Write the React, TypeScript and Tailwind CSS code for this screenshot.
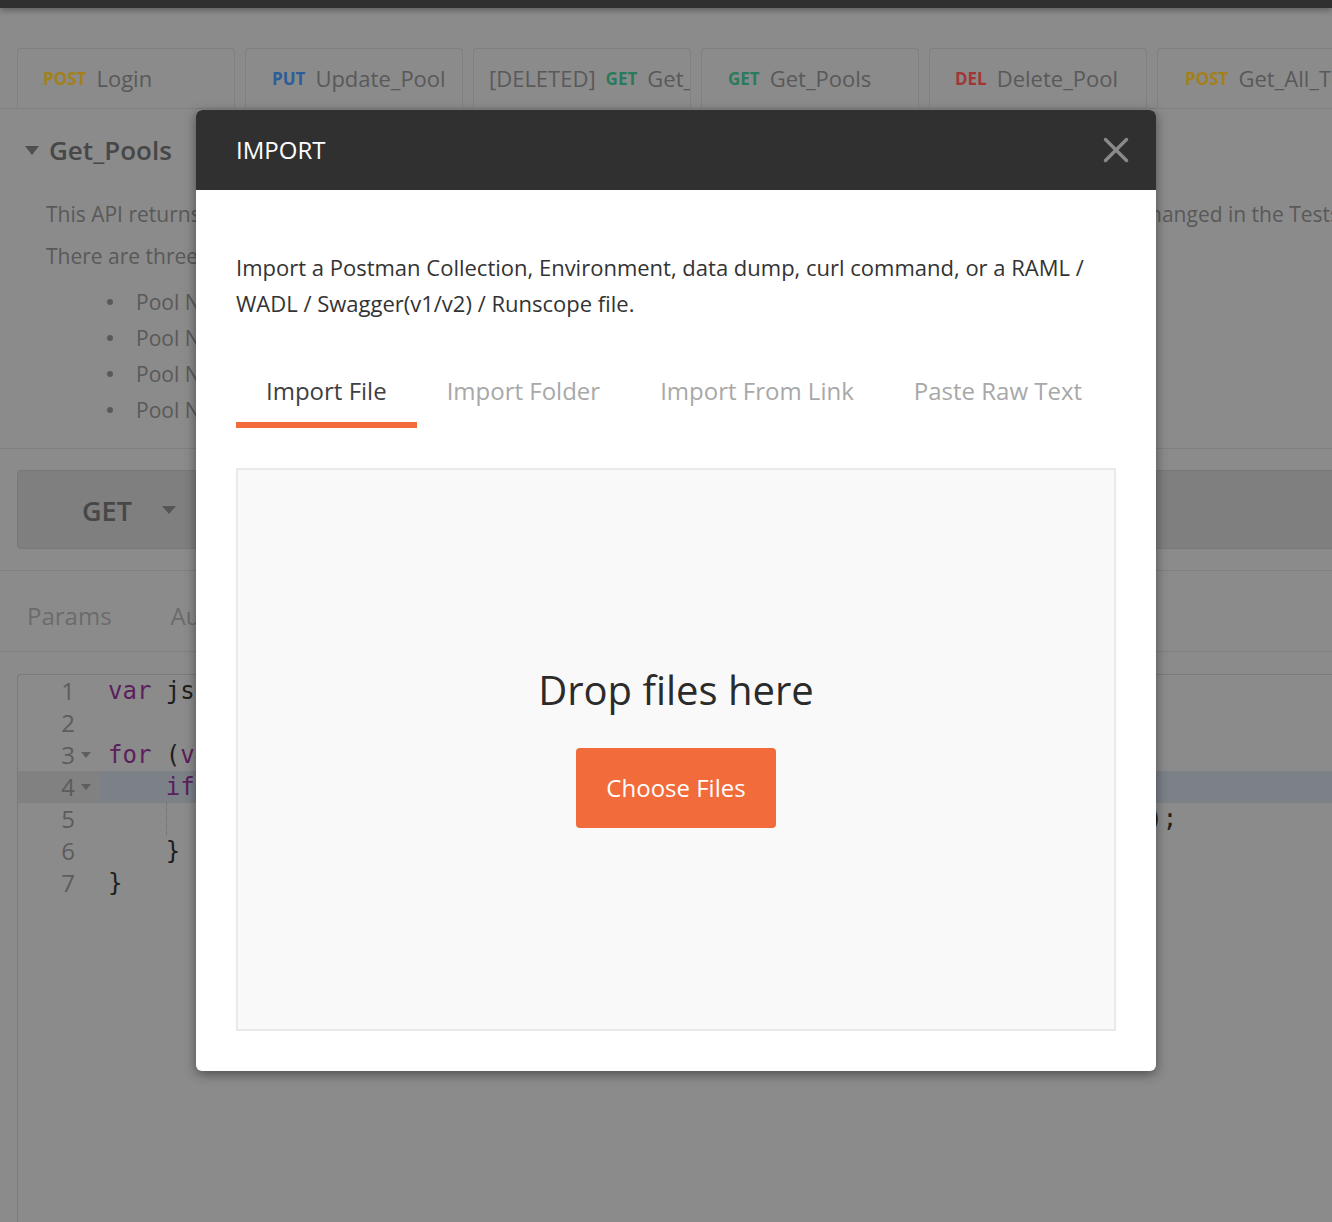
import React from "react";

type Tab = { pre?: string; m: string; c: string; n: string; pl: string };

const tabs: Tab[] = [
  { m: "POST", c: "text-[#a3801c]", n: "Login", pl: "pl-[25px]" },
  { m: "PUT", c: "text-[#2c5d98]", n: "Update_Pool", pl: "pl-[26px]" },
  { pre: "[DELETED]", m: "GET", c: "text-[#2b7a5b]", n: "Get_Pools", pl: "pl-[15px]" },
  { m: "GET", c: "text-[#2b7a5b]", n: "Get_Pools", pl: "pl-[26px]" },
  { m: "DEL", c: "text-[#a23636]", n: "Delete_Pool", pl: "pl-[25px]" },
  { m: "POST", c: "text-[#a3801c]", n: "Get_All_Tenants", pl: "pl-[27px]" },
];

const K = ({ children }: { children: React.ReactNode }) => (
  <span className="text-[#5a1f5c]">{children}</span>
);

function Fold() {
  return (
    <svg width="10" height="6" viewBox="0 0 10 6" className="block">
      <polygon points="0,0 10,0 5,6" fill="#5e5e5e" />
    </svg>
  );
}

function CodeLine({
  n,
  fold,
  hl,
  children,
}: {
  n: number;
  fold?: boolean;
  hl?: boolean;
  children?: React.ReactNode;
}) {
  return (
    <div className="flex h-[32px]">
      <div
        className={`w-[82px] shrink-0 flex items-center justify-end pr-[8px] ${
          hl ? "bg-[#818181]" : ""
        }`}
      >
        <span className="font-['Open_Sans',sans-serif] text-[24px] leading-[32px] text-[#5c5c5c]">
          {n}
        </span>
        <span className="w-[12px] ml-[5px] flex items-center justify-center">
          {fold ? <Fold /> : null}
        </span>
      </div>
      <div
        className={`flex-1 pl-[8px] whitespace-pre font-['DejaVu_Sans_Mono',monospace] text-[24px] leading-[32px] text-[#1e1e1e] ${
          hl ? "bg-[#7c8188]" : ""
        }`}
      >
        {children}
      </div>
    </div>
  );
}

export default function App() {
  return (
    <div className="relative w-[1332px] h-[1222px] overflow-hidden bg-[#8b8b8b] font-['Open_Sans',sans-serif]">
      {/* top bar */}
      <div className="h-[8px] bg-[#303030] shadow-[0_2px_6px_rgba(0,0,0,0.35)] relative z-10" />

      {/* request tabs */}
      <div className="pt-[40px] border-b border-[#808080]">
        <div className="flex gap-[10px] pl-[17px]">
          {tabs.map((t, i) => (
            <div
              key={i}
              className={`flex items-center w-[218px] h-[60px] shrink-0 border border-b-0 border-[#808080] rounded-t-[4px] overflow-hidden whitespace-nowrap ${t.pl}`}
            >
              {t.pre ? (
                <span className="text-[22px] text-[#595959] mr-[10px]">{t.pre}</span>
              ) : null}
              <span className={`text-[17px] font-bold ${t.c}`}>{t.m}</span>
              <span className="text-[22px] text-[#595959] ml-[10px]">{t.n}</span>
            </div>
          ))}
        </div>
      </div>

      {/* heading */}
      <div className="mt-[23px] pl-[25px] flex items-center h-[36px] gap-[10px]">
        <svg width="14" height="9" viewBox="0 0 14 9">
          <polygon points="0,0 14,0 7,9" fill="#4f4f4f" />
        </svg>
        <span className="text-[26px] font-semibold text-[#474747]">Get_Pools</span>
      </div>

      <p className="mt-[28px] pl-[46px] flex whitespace-nowrap text-[21px] leading-[36px] text-[#595959]">
        <span className="w-[1093px] shrink-0 overflow-hidden">
          This API returns the list of all pools. The pool data that is returned can be
        </span>
        <span>changed in the Tests tab.</span>
      </p>
      <p className="mt-[6px] pl-[46px] text-[21px] leading-[36px] text-[#595959] whitespace-nowrap">
        There are three pools available to the tenant:
      </p>
      <ul className="mt-[10px]">
        {["Pool Name 1", "Pool Name 2", "Pool Name 3", "Pool Name 4"].map((p) => (
          <li
            key={p}
            className="flex items-center pl-[107px] gap-[23px] text-[21px] leading-[36px] text-[#595959]"
          >
            <span className="w-[6px] h-[6px] rounded-full bg-[#595959]" />
            {p}
          </li>
        ))}
      </ul>

      <div className="mt-[20px] border-t border-[#808080]" />

      {/* method / url bar */}
      <div className="mt-[21px] ml-[17px] w-[1400px] h-[79px] rounded-[4px] border border-[#787878] bg-[#7f7f7f] flex items-center">
        <span className="ml-[64px] mt-[3px] text-[27px] font-semibold text-[#474747]">GET</span>
        <svg width="14" height="8" viewBox="0 0 14 8" className="ml-[30px]">
          <polygon points="0,0 14,0 7,8" fill="#555555" />
        </svg>
      </div>

      <div className="mt-[21px] border-t border-[#808080]" />

      {/* params row */}
      <div className="h-[81px] pt-[10px] flex items-center border-b border-[#808080] text-[24px] text-[#6b6b6b]">
        <span className="ml-[27px]">Params</span>
        <span className="ml-[59px]">Authorization</span>
      </div>

      {/* editor */}
      <div className="mt-[22px] ml-[17px] h-[600px] border-t border-l border-[#7a7a7a] rounded-tl-[4px]">
        <CodeLine n={1}>
          <K>var</K> jsonData = JSON.parse(responseBody);
        </CodeLine>
        <CodeLine n={2} />
        <CodeLine n={3} fold>
          <K>for</K> (<K>var</K> i = 0; i &lt; jsonData.length; i++) {"{"}
        </CodeLine>
        <CodeLine n={4} fold hl>
          {"    "}
          <K>if</K> (jsonData[i].name) {"{"}
        </CodeLine>
        <CodeLine n={5}>
          {"    "}
          <span className="inline-block h-[32px] align-top border-l border-dotted border-[#6c6c6c] -mr-px" />
          {'    postman.setEnvironmentVariable("pool_" + i, jsonData[i].poolName);'}
        </CodeLine>
        <CodeLine n={6}>{"    }"}</CodeLine>
        <CodeLine n={7}>{"}"}</CodeLine>
      </div>

      {/* modal */}
      <div className="absolute left-[196px] top-[110px] w-[960px] rounded-[6px] bg-white shadow-[0_3px_12px_rgba(0,0,0,0.45)] overflow-hidden">
        <div className="h-[80px] bg-[#303030] flex items-center justify-between pl-[40px] pr-[27px]">
          <span className="text-[24px] text-white">IMPORT</span>
          <svg width="26" height="26" viewBox="0 0 26 26">
            <line x1="2.5" y1="2.5" x2="23.5" y2="23.5" stroke="#8a8a8a" strokeWidth="3.4" strokeLinecap="round" />
            <line x1="23.5" y1="2.5" x2="2.5" y2="23.5" stroke="#8a8a8a" strokeWidth="3.4" strokeLinecap="round" />
          </svg>
        </div>
        <div className="pt-[59px] px-[40px] pb-[40px]">
          <p className="text-[22px] leading-[36px] text-[#333333] whitespace-nowrap">
            Import a Postman Collection, Environment, data dump, curl command, or a RAML /
            <br />
            WADL / Swagger(v1/v2) / Runscope file.
          </p>
          <div className="mt-[55px] flex">
            <div className="px-[30px] pb-[16px] border-b-[6px] border-[#f26b3a] text-[24px] leading-[30px] text-[#3f3f3f]">
              Import File
            </div>
            <div className="px-[30px] pb-[16px] border-b-[6px] border-transparent text-[24px] leading-[30px] text-[#a8a8a8]">
              Import Folder
            </div>
            <div className="px-[30px] pb-[16px] border-b-[6px] border-transparent text-[24px] leading-[30px] text-[#a8a8a8]">
              Import From Link
            </div>
            <div className="px-[30px] pb-[16px] border-b-[6px] border-transparent text-[24px] leading-[30px] text-[#a8a8a8]">
              Paste Raw Text
            </div>
          </div>
          <div className="mt-[40px] h-[563px] border-2 border-[#e9e9e9] bg-[#f9f9f9] flex flex-col items-center pt-[192px]">
            <div className="text-[40px] leading-[56px] text-[#2b2b2b]">Drop files here</div>
            <button className="mt-[30px] w-[200px] h-[80px] rounded-[4px] bg-[#f26b3a] text-white text-[24px]">
              Choose Files
            </button>
          </div>
        </div>
      </div>
    </div>
  );
}
